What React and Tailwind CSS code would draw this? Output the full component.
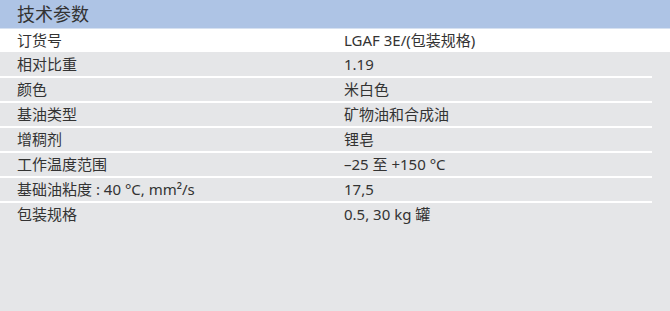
const rows = [
  ['相对比重', '1.19'],
  ['颜色', '米白色'],
  ['基油类型', '矿物油和合成油'],
  ['增稠剂', '锂皂'],
  ['工作温度范围', '–25 至 +150 °C'],
  ['基础油粘度 : 40 °C, mm²/s', '17,5'],
  ['包装规格', '0.5, 30 kg 罐'],
];

function Row({ label, value }) {
  return (
    <div className="grid h-[23px] grid-cols-[327px_1fr] items-center pl-[17px]">
      <span>{label}</span>
      <span>{value}</span>
    </div>
  );
}

export default function App() {
  return (
    <div
      className="h-[311px] w-[670px] overflow-hidden bg-[#e5e6e8] text-[15px] leading-none text-[#333333]"
      style={{ fontFamily: '"Noto Sans", "Noto Sans CJK SC", sans-serif' }}
    >
      <div className="flex h-[29px] items-center border-b border-[#d6e1f1] bg-[#aec4e5] pl-[17px] text-[18px]">
        技术参数
      </div>
      <div className="h-[23px] bg-white">
        <Row label="订货号" value="LGAF 3E/(包装规格)" />
      </div>
      <div className="pt-[1px]">
        {rows.map(([label, value], i) => (
          <div key={label}>
            <Row label={label} value={value} />
            {i < rows.length - 1 && <div className="mr-[18px] h-[2px] bg-white" />}
          </div>
        ))}
      </div>
    </div>
  );
}
